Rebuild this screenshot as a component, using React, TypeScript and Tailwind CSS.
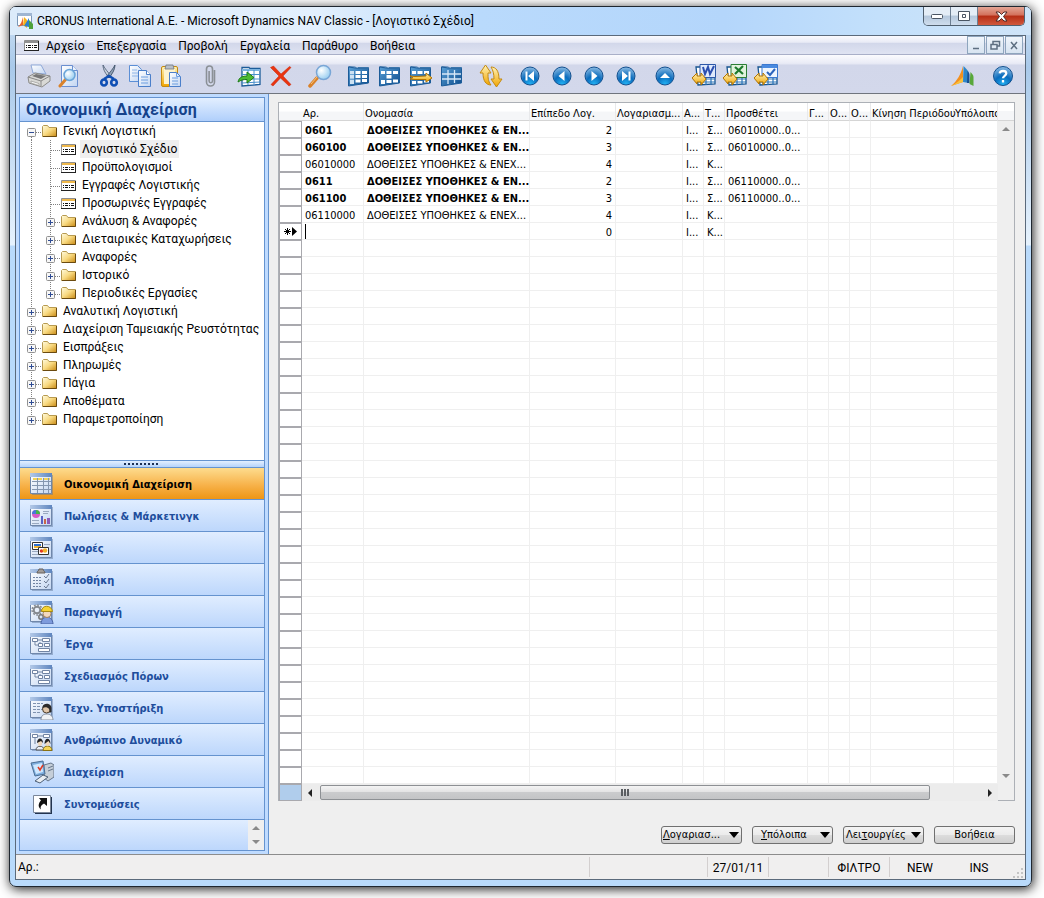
import React, { useState } from "react";

type IconProps = { children: React.ReactNode; size?: number };

const Svg: React.FC<IconProps> = ({ children, size = 24 }) => (
  <svg width={size} height={size} viewBox={`0 0 ${size} ${size}`} fill="none" aria-hidden="true" className="shrink-0">
    {children}
  </svg>
);

/* Gradients shared by all icons */
const Gradients = () => (
  <svg width="0" height="0" className="absolute" aria-hidden="true">
    <defs>
      <linearGradient id="folder" x1="0" y1="0" x2="1" y2="1">
        <stop offset="0" stopColor="#fffbe0" />
        <stop offset="0.5" stopColor="#f8d980" />
        <stop offset="1" stopColor="#c98a14" />
      </linearGradient>
      <linearGradient id="sheet" x1="0" y1="0" x2="1" y2="1">
        <stop offset="0" stopColor="#ffffff" />
        <stop offset="1" stopColor="#c3d6f2" />
      </linearGradient>
      <linearGradient id="bar" x1="0" y1="0" x2="1" y2="0">
        <stop offset="0" stopColor="#b3c9e8" />
        <stop offset="1" stopColor="#5f86bf" />
      </linearGradient>
      <linearGradient id="gold" x1="0" y1="0" x2="0" y2="1">
        <stop offset="0" stopColor="#fff3b8" />
        <stop offset="1" stopColor="#f0a400" />
      </linearGradient>
      <radialGradient id="ball" cx="0.5" cy="0.95" r="0.9">
        <stop offset="0" stopColor="#22b2f4" />
        <stop offset="0.5" stopColor="#0a6cbd" />
        <stop offset="1" stopColor="#7fb3df" />
      </radialGradient>
      <radialGradient id="lens" cx="0.35" cy="0.35" r="0.8">
        <stop offset="0" stopColor="#ffffff" />
        <stop offset="1" stopColor="#86c5ee" />
      </radialGradient>
      <linearGradient id="blue" x1="0" y1="0" x2="1" y2="1">
        <stop offset="0" stopColor="#5aa0d6" />
        <stop offset="1" stopColor="#0b4b8c" />
      </linearGradient>
    </defs>
  </svg>
);

const PrinterIcon = () => (
  <Svg>
    <path d="M6 9 4 1h10l5 9z" fill="url(#sheet)" stroke="#8fa9d8" />
    <path d="M1 13 8 9l15 3v5l-8 6L2 19z" fill="#d9d9d6" stroke="#8b8b88" />
    <path d="m1 13 13 4 9-5M14 17v5" stroke="#888" />
    <path d="m5 12 4-2 10 2-5 3z" fill="#777" />
    <path d="m4 17 8 2.500v2L4 19z" fill="#f6f6f4" stroke="#888" strokeWidth=".6" />
  </Svg>
);

const PreviewIcon = () => (
  <Svg>
    <path d="M3.500 1.500h11l5 5v16h-16z" fill="url(#sheet)" stroke="#6b8fd0" />
    <path d="M14.500 1.500v5h5" fill="#e9f1fc" stroke="#6b8fd0" />
    <path d="m8 15-6 7" stroke="#d9822b" strokeWidth="3" strokeLinecap="round" />
    <circle cx="11.500" cy="11" r="5.500" fill="url(#lens)" stroke="#6aa4d8" strokeWidth="1.500" />
  </Svg>
);

const CutIcon = () => (
  <Svg>
    <path d="M6 1c0 5 3 9 6 13l2-2C11 8 8 5 6 1z" fill="#c9d3de" stroke="#44566e" strokeWidth=".8" />
    <path d="M18 1c0 5-3 9-6 13l-2-2c3-4 6-7 8-11z" fill="#8fa1b5" stroke="#34465e" strokeWidth=".8" />
    <path d="m7 15 5-3 5 3" stroke="#0f4fb4" strokeWidth="2.500" />
    <ellipse cx="7" cy="18.500" rx="2.800" ry="3" stroke="#0f4fb4" strokeWidth="2.600" />
    <ellipse cx="17" cy="18.500" rx="2.800" ry="3" stroke="#0f4fb4" strokeWidth="2.600" />
  </Svg>
);

const CopyIcon = () => (
  <Svg>
    <path d="M1.500 1.500h8l4 4v12h-12z" fill="url(#sheet)" stroke="#5b8fd6" />
    <path d="M4 6h5M4 9h6M4 12h6" stroke="#8fb6e8" />
    <path d="M10.500 6.500h8l4 4v12h-12z" fill="url(#sheet)" stroke="#4b7fca" />
    <path d="M18.500 6.500v4h4" fill="#fff" stroke="#4b7fca" />
    <path d="M13 13h7M13 16h7M13 19h7" stroke="#6d9ee0" />
  </Svg>
);

const PasteIcon = () => (
  <Svg>
    <rect x="2.500" y="2.500" width="16" height="20" rx="1.500" fill="url(#gold)" stroke="#c48a12" />
    <path d="M5 5h11v15H5z" fill="#fdf3cf" />
    <path d="M7 1h7l1 4H6z" fill="#b9bfc8" stroke="#6f7782" strokeWidth=".8" />
    <path d="M10.500 8.500h7l4 4v10h-11z" fill="url(#sheet)" stroke="#4b7fca" />
    <path d="M17.500 8.500v4h4M13 14h6M13 17h6M13 20h6" stroke="#6d9ee0" />
  </Svg>
);

const ClipIcon = () => (
  <Svg>
    <path d="M16.500 6v12a4 4 0 0 1-8 0V5a3 3 0 0 1 6 0v12a1.700 1.700 0 0 1-3.400 0V7" stroke="#8b9096" strokeWidth="1.600" />
  </Svg>
);

const TableSheet = () => (
  <>
    <path d="m1.500 3 7 1h13v15l-20 3z" fill="url(#blue)" stroke="#1c5c99" />
    <path d="m1.500 2.500 7 .5 1 1.500h12V3.500H11" fill="#8fc1e8" stroke="#1c5c99" strokeWidth=".7" />
  </>
);

const InsertIcon = () => (
  <Svg>
    <path d="M5 3.500h7l1 1h10v16L5 22z" fill="#fff" stroke="#1c5c99" strokeWidth="1.300" />
    <path d="M5 6h18" stroke="#7db4e0" strokeWidth="2" />
    <path d="M5 10.500h18M5 15h18M5 19l18-1M11 6v15M17 6v15" stroke="#4a90cc" />
    <path d="M1 18c1-5 5-6 9-6V8l7 5.500-7 5.500v-3.500c-4 0-6 .5-9 2.500z" fill="#4dbb32" stroke="#1b7a17" />
  </Svg>
);

const DeleteIcon = () => (
  <Svg>
    <path d="M1.500 3.500 4.500 2l7.500 8 8.500-7.500 1.500 1-8 8.500 8 8.500-2 1.500-8.500-8L4 22l-2-1.500 8-8.500z" fill="#ea3410" stroke="#c42205" strokeWidth=".5" />
  </Svg>
);

const FindIcon = () => (
  <Svg>
    <path d="m9 14-7 8" stroke="#d9822b" strokeWidth="3.500" strokeLinecap="round" />
    <path d="m9 13-6 7" stroke="#f8c27a" strokeWidth="1" />
    <circle cx="15.500" cy="8.500" r="7" fill="url(#lens)" stroke="#79a6d6" strokeWidth="1.500" />
  </Svg>
);

const CardIcon = () => (
  <Svg>
    <TableSheet />
    <path d="M3 7h4v3H3zM3 11h4v3.500H3zM3 16h4v4H3zM8.500 7h5v3h-5zM8.500 11h5v3h-5zM8.500 15.500h5v3h-5zM15 7h5v3h-5zM15 11h5v3h-5zM15 15h5v3h-5z" fill="#fff" />
    <path d="M3 7h4v13H3z" fill="#9cc6e8" opacity=".5" />
  </Svg>
);

const ListIcon = () => (
  <Svg>
    <TableSheet />
    <path d="M3 7h4v3H3zM8.500 7h5v3h-5zM15 7h5v3h-5zM8.500 11h5v3.500h-5zM3 16h4v4H3zM8.500 16h5v3h-5zM15 15.500h5v3h-5z" fill="#fff" />
  </Svg>
);

const JumpIcon = () => (
  <Svg>
    <TableSheet />
    <path d="M3 7h4v3H3zM8.500 7h5v3h-5zM15 7h5v3h-5zM3 17h4v3H3zM8.500 17h5v2.500h-5zM15 16.500h5v2h-5z" fill="#fff" />
    <path d="m1 12 5 .5 11-.5V9l6 5-6 4v-2.500H6L1 15l3-1.500z" fill="url(#gold)" stroke="#b37400" />
  </Svg>
);

const MatrixIcon = () => (
  <Svg>
    <TableSheet />
    <path d="M2 10h19M2 15h19M8 6v14M14.500 6v13" stroke="#d7e8f7" strokeWidth="1.300" />
  </Svg>
);

const RefreshIcon = () => (
  <Svg>
    <path d="m6.500 1 5.500 8H9c0 5 0 8 3 12-5 0-8-4-8-12H1z" fill="url(#gold)" stroke="#c48a12" />
    <path d="M17.500 23 12 15h3c0-5-1-9-3-12 5 0 8 4 8 12h3z" fill="url(#gold)" stroke="#c48a12" />
  </Svg>
);

const Ball: React.FC<{ d: string }> = ({ d }) => (
  <Svg>
    <circle cx="12" cy="12" r="9" fill="url(#ball)" stroke="#12508f" />
    <path d={d} fill="#fff" />
  </Svg>
);

const ExportIcon: React.FC<{ children: React.ReactNode }> = ({ children }) => (
  <Svg>
    <path d="M4 3h19v17l-17 1z" fill="#fff" stroke="#17548f" strokeWidth="1.300" />
    <path d="M4 15h19M4 18h19M9 14v7M14 14v7M19 14v7" stroke="#2b74b8" strokeWidth="1.200" />
    {children}
    <path d="m0 14 5-5v3h4v-3l5 6-5 6v-3H5v2z" fill="url(#gold)" stroke="#b37400" />
  </Svg>
);

const WordIcon = () => (
  <ExportIcon>
    <path d="M8 .500h15.500v13H8z" fill="#dfe9fb" stroke="#2c57a8" />
    <path d="m11 3 2 7 3-7 2 7 4-8" stroke="#2b4fb0" strokeWidth="2" />
  </ExportIcon>
);

const ExcelIcon = () => (
  <ExportIcon>
    <path d="M8 .500h15.500v13H8z" fill="#e0f2dc" stroke="#2b7d34" />
    <path d="m12 3 8 7M20 2l-8 8" stroke="#1c7a2c" strokeWidth="2.200" />
  </ExportIcon>
);

const TaskIcon = () => (
  <ExportIcon>
    <path d="M8 .500h15.500v13H8z" fill="#eef5fe" stroke="#3b78cf" />
    <path d="M8 1h15v3H8z" fill="#4a8ae0" />
    <path d="m13 8 3 3 5-6" stroke="#2b64bd" strokeWidth="2" />
  </ExportIcon>
);

const DynamicsIcon = () => (
  <Svg>
    <path d="M0 22C6 17 10 10 12 2v16z" fill="#f2901e" />
    <path d="M0 22c6-3 9-6 12-9v5z" fill="#f9c13b" />
    <path d="m12 18 .5-16c2 2 4 4 5 6v11z" fill="#2e86c8" />
    <path d="m16 19 .5-12c1 1 2 2 2 4v8z" fill="#174f93" />
    <path d="m18.500 20 1-12c1 1 3 3 3 5v9z" fill="#58a83a" />
  </Svg>
);

const HelpIcon = () => (
  <Svg>
    <circle cx="12" cy="12" r="9.500" fill="url(#ball)" stroke="#12508f" />
    <path d="M8.700 9.300C9 6.500 15 6 15.300 9.300c0 2.500-3.300 2.500-3.300 5M12 16v2.500" stroke="#fff" strokeWidth="2.300" />
  </Svg>
);

const AppIcon = () => (
  <Svg size={18}>
    <path d="M1.500 1.500h14v12h-14z" fill="#fff" stroke="#7b98b8" />
    <path d="M1 1h15v3H1z" fill="#9fb6d2" />
    <path d="M2 15C5 12 6 9 7 5v8z" fill="#e8632a" />
    <path d="m7 13 1-8 3 3v8z" fill="#f5b21c" />
    <path d="m8 14 5-8v9z" fill="#2d7fca" />
    <path d="m13 8 4 4v5h-4z" fill="#4da23a" />
  </Svg>
);

const FormIcon: React.FC<{ bar: string }> = ({ bar }) => (
  <svg width="15" height="11" viewBox="0 0 15 11" aria-hidden="true" className="shrink-0">
    <path d="M.5.5h14v10H.5z" fill="#fff" stroke="#8f8f8f" />
    <path d="M1 1h13v2H1z" fill={bar} />
    <path d="M14.500 1v10M0 10.500h15" stroke="#222" />
    <path d="M2 5h1v1H2zM4 5h3v1H4zM8 5h1v1H8zM10 5h3v1h-3zM2 7h1v1H2zM4 7h3v1H4zM8 7h1v1H8zM10 7h3v1h-3z" fill="#111" />
  </svg>
);

const FolderIcon = () => (
  <svg width="15" height="12" viewBox="0 0 15 12" aria-hidden="true" className="shrink-0">
    <path d="M.5 11.500v-10l1-1h4l1.500 2h7.500v9z" fill="url(#folder)" stroke="#b79a50" />
    <path d="M14.500 3v8.500H1" stroke="#6a4a10" fill="none" />
  </svg>
);

/* Sidebar icons share a small window frame */
const Frame: React.FC<{ children: React.ReactNode }> = ({ children }) => (
  <Svg>
    <path d="M2 3h21v20H2z" fill="#5d7396" opacity=".45" />
    <path d="M.5 1.500h21v20H.5z" fill="url(#sheet)" stroke="#6f87ab" />
    <path d="M0 1h22v4H0z" fill="url(#bar)" />
    {children}
  </Svg>
);

const FlowChart = () => (
  <path d="M2.500 6.500h5v3h-5zM12.500 6.500h7v3h-7zM8.500 11.500h4v3h-4zM14.500 11.500h5v3h-5zM8.500 16.500h11v3h-11zM7 8h5M5 10v3h3M10 10v1" fill="#fff" stroke="#7184a3" />
);

const FinanceIcon = () => (
  <Frame>
    <path d="M3 6h4v2H3zM8 6h4v2H8zM14 6h6v2h-6z" fill="#f1d35a" />
    <path d="M2 9.500h19M2 13.500h19M2 17.500h19M7.500 6v15M13.500 6v15M18.500 6v15" stroke="#8496b0" />
  </Frame>
);

const SalesIcon = () => (
  <Frame>
    <circle cx="6" cy="10" r="4" fill="#d65bc5" />
    <path d="M6 10V6a4 4 0 0 1 4 4z" fill="#46b44a" />
    <path d="M6 10H2a4 4 0 0 1 4-4z" fill="#4a76d8" />
    <path d="M2 16.500h7M2 19.500h7M13 7.500h6M13 9.500h5" stroke="#9aa9c0" />
    <path d="M11 12h2v8h-2z" fill="#5a63c4" />
    <path d="M14 15h2v5h-2z" fill="#c9664a" />
    <path d="M17 14h3v6h-3z" fill="#8c5ab8" />
  </Frame>
);

const PurchaseIcon = () => (
  <Frame>
    <path d="M2 12.500h5M2 15.500h7M2 18.500h6M14 8.500h6" stroke="#9aa9c0" />
    <path d="M2.500 6.500h10v7h-10z" fill="#fff" stroke="#333" />
    <path d="M4 8h7v2H4z" fill="#2d6fd0" />
    <path d="M4 10h7v2H4z" fill="#f3b32d" />
    <path d="M8.500 11.500h10v7h-10z" fill="#fff" stroke="#333" />
    <circle cx="11.500" cy="15" r="1.800" fill="#e23b22" />
    <circle cx="15" cy="14.500" r="2.300" fill="#f3b32d" />
  </Frame>
);

const WarehouseIcon = () => (
  <Frame>
    <path d="M7 5c0-2 2-2 2-4h4c0 2 2 2 2 4z" fill="#a19c98" stroke="#66605c" />
    <path d="M3 9.500h9M3 12.500h8M3 15.500h9M3 18.500h8" stroke="#7184a3" strokeDasharray="2 1" />
    <path d="m14 8 2 2 3-4M14 13l2 2 3-4M14 18l2 2 3-4" stroke="#6c7a92" />
  </Frame>
);

const ProductionIcon = () => (
  <Frame>
    <circle cx="7" cy="10" r="3.300" stroke="#85898f" strokeWidth="2" />
    <circle cx="7" cy="10" r="5" stroke="#85898f" strokeWidth="1.500" strokeDasharray="1.800 1.500" />
    <circle cx="11" cy="17" r="2.200" stroke="#777" strokeWidth="1.500" />
    <path d="M11 24c0-5 4-7 6-7s6 2 6 7z" fill="#7e9bdc" stroke="#4a64a5" />
    <circle cx="17" cy="13.500" r="4" fill="#f3d9bf" stroke="#a5835f" />
    <path d="M11.500 11.500c0-7 10-7 11 0z" fill="#f6d332" stroke="#a98a12" />
  </Frame>
);

const ServiceIcon = () => (
  <Frame>
    <path d="M3 7.500h10M3 10.500h7M3 13.500h9M3 16.500h7" stroke="#8093b0" strokeDasharray="3 1" />
    <path d="M11 24c0-5 3-6 6-6s6 2 6 6z" fill="#f0f2f5" stroke="#8a93a3" />
    <circle cx="16.500" cy="13" r="4" fill="#e2c6a8" stroke="#4b3c2c" />
    <path d="M12.500 11c1-5 9-4 9 1v4l-2 1c1-5-3-7-7-5z" fill="#2d2b2a" />
  </Frame>
);

const PeopleIcon = () => (
  <Frame>
    <path d="M2.500 6.500h5v3h-5zM13.500 6.500h6v3h-6zM7 8h6M5 10v6" fill="#fff" stroke="#7184a3" />
    <path d="M6 22c0-5 8-5 8 0z" fill="#e8eef7" stroke="#555" />
    <path d="M13 22.500c0-6 9-6 9 0z" fill="#f3d457" stroke="#8a7212" />
    <ellipse cx="10" cy="15" rx="2.200" ry="3" fill="#eed8bd" />
    <path d="M7 15c0-6 6-6 6 0l-2-2z" fill="#222" />
    <ellipse cx="17.500" cy="15" rx="2.200" ry="3" fill="#eed8bd" />
    <path d="M14.500 16c0-7 6-7 6 0l-2-3z" fill="#222" />
  </Frame>
);

const AdminIcon = () => (
  <Svg>
    <path d="m14 5 7-2 3 2v12l-6 4-4-3z" fill="#c5ced8" stroke="#66778c" />
    <path d="m18 8 5-2M18 11l5-2" stroke="#66778c" />
    <path d="m1 3 12-2 2 13-10 2z" fill="#7eaede" stroke="#4b6e94" />
    <path d="m3 5 9-2 1 9-7 2z" fill="#cfe8ff" />
    <path d="m8 7 2 3 3-5" stroke="#e23b22" strokeWidth="1.500" />
    <path d="m5 21 8-6 5 2-8 6z" fill="#e8edf2" stroke="#4e6077" />
  </Svg>
);

const ShortcutIcon = () => (
  <Svg>
    <path d="M5 5h17v17H5z" fill="#23344f" />
    <path d="M3.500 3.500h17v17h-17z" fill="#fff" stroke="#7a8699" />
    <path d="M9 6h8v8l-3-2.500c-3 2-4 3-3 6-4-3-2-7 0-9z" fill="#111" />
  </Svg>
);

const toolbarGroups: { gap: string; items: { label: string; icon: React.ReactNode }[] }[] = [
  {
    gap: "gap-[7px]",
    items: [
      { label: "Εκτύπωση", icon: <PrinterIcon /> },
      { label: "Προεπισκόπηση", icon: <PreviewIcon /> },
    ],
  },
  {
    gap: "gap-[7px]",
    items: [
      { label: "Αποκοπή", icon: <CutIcon /> },
      { label: "Αντιγραφή", icon: <CopyIcon /> },
      { label: "Επικόλληση", icon: <PasteIcon /> },
    ],
  },
  { gap: "gap-2", items: [{ label: "Συνδέσεις", icon: <ClipIcon /> }] },
  {
    gap: "gap-2",
    items: [
      { label: "Εισαγωγή", icon: <InsertIcon /> },
      { label: "Διαγραφή", icon: <DeleteIcon /> },
    ],
  },
  { gap: "gap-2", items: [{ label: "Εύρεση", icon: <FindIcon /> }] },
  {
    gap: "gap-[7px]",
    items: [
      { label: "Φίλτρο πεδίου", icon: <CardIcon /> },
      { label: "Φίλτρο πίνακα", icon: <ListIcon /> },
      { label: "Φίλτρο ροής", icon: <JumpIcon /> },
      { label: "Εμφάνιση όλων", icon: <MatrixIcon /> },
    ],
  },
  { gap: "gap-2", items: [{ label: "Ταξινόμηση", icon: <RefreshIcon /> }] },
  {
    gap: "gap-2",
    items: [
      { label: "Πρώτο", icon: <Ball d="M7.500 7.500h2v9h-2zM16 7v10l-6-5z" /> },
      { label: "Προηγούμενο", icon: <Ball d="M14.500 7v10l-6-5z" /> },
      { label: "Επόμενο", icon: <Ball d="M9.500 7v10l6-5z" /> },
      { label: "Τελευταίο", icon: <Ball d="M14.500 7.500h2v9h-2zM8 7v10l6-5z" /> },
    ],
  },
  { gap: "gap-2", items: [{ label: "Επάνω", icon: <Ball d="M7 14h10l-5-5z" /> }] },
  {
    gap: "gap-[7px]",
    items: [
      { label: "Word", icon: <WordIcon /> },
      { label: "Excel", icon: <ExcelIcon /> },
      { label: "Εργασίες", icon: <TaskIcon /> },
    ],
  },
];

interface TreeRow {
  label: string;
  level: number;
  kind: "plus" | "minus" | "leaf";
  last?: boolean;
}

const treeRows: TreeRow[] = [
  { label: "Γενική Λογιστική", level: 0, kind: "minus" },
  { label: "Λογιστικό Σχέδιο", level: 1, kind: "leaf" },
  { label: "Προϋπολογισμοί", level: 1, kind: "leaf" },
  { label: "Εγγραφές Λογιστικής", level: 1, kind: "leaf" },
  { label: "Προσωρινές Εγγραφές", level: 1, kind: "leaf" },
  { label: "Ανάλυση & Αναφορές", level: 1, kind: "plus" },
  { label: "Διεταιρικές Καταχωρήσεις", level: 1, kind: "plus" },
  { label: "Αναφορές", level: 1, kind: "plus" },
  { label: "Ιστορικό", level: 1, kind: "plus" },
  { label: "Περιοδικές Εργασίες", level: 1, kind: "plus", last: true },
  { label: "Αναλυτική Λογιστική", level: 0, kind: "plus" },
  { label: "Διαχείριση Ταμειακής Ρευστότητας", level: 0, kind: "plus" },
  { label: "Εισπράξεις", level: 0, kind: "plus" },
  { label: "Πληρωμές", level: 0, kind: "plus" },
  { label: "Πάγια", level: 0, kind: "plus" },
  { label: "Αποθέματα", level: 0, kind: "plus" },
  { label: "Παραμετροποίηση", level: 0, kind: "plus", last: true },
];

const navItems = [
  { label: "Οικονομική Διαχείριση", icon: <FinanceIcon /> },
  { label: "Πωλήσεις & Μάρκετινγκ", icon: <SalesIcon /> },
  { label: "Αγορές", icon: <PurchaseIcon /> },
  { label: "Αποθήκη", icon: <WarehouseIcon /> },
  { label: "Παραγωγή", icon: <ProductionIcon /> },
  { label: "Έργα", icon: <Frame><FlowChart /></Frame> },
  { label: "Σχεδιασμός Πόρων", icon: <Frame><FlowChart /></Frame> },
  { label: "Τεχν. Υποστήριξη", icon: <ServiceIcon /> },
  { label: "Ανθρώπινο Δυναμικό", icon: <PeopleIcon /> },
  { label: "Διαχείριση", icon: <AdminIcon /> },
  { label: "Συντομεύσεις", icon: <ShortcutIcon /> },
];

const columns = [
  { label: "Αρ.", width: "w-[62px]" },
  { label: "Ονομασία", width: "w-[166px]" },
  { label: "Επίπεδο Λογ.", width: "w-[86px]" },
  { label: "Λογαριασμ...", width: "w-[67px]" },
  { label: "Α...", width: "w-[21px]" },
  { label: "Τ...", width: "w-[21px]" },
  { label: "Προσθέτει", width: "w-[83px]" },
  { label: "Γ...", width: "w-[21px]" },
  { label: "Ο...", width: "w-[21px]" },
  { label: "Ο...", width: "w-[21px]" },
  { label: "Κίνηση Περιόδου", width: "w-[83px]" },
  { label: "Υπόλοιπο", width: "" },
];

const accounts = [
  { no: "0601", name: "ΔΟΘΕΙΣΕΣ ΥΠΟΘΗΚΕΣ & ΕΝ...", level: 2, type: "Σ...", totals: "06010000..0...", bold: true },
  { no: "060100", name: "ΔΟΘΕΙΣΕΣ ΥΠΟΘΗΚΕΣ & ΕΝ...", level: 3, type: "Σ...", totals: "06010000..0...", bold: true },
  { no: "06010000", name: "ΔΟΘΕΙΣΕΣ ΥΠΟΘΗΚΕΣ & ΕΝΕΧ...", level: 4, type: "Κ...", totals: "", bold: false },
  { no: "0611", name: "ΔΟΘΕΙΣΕΣ ΥΠΟΘΗΚΕΣ & ΕΝ...", level: 2, type: "Σ...", totals: "06110000..0...", bold: true },
  { no: "061100", name: "ΔΟΘΕΙΣΕΣ ΥΠΟΘΗΚΕΣ & ΕΝ...", level: 3, type: "Σ...", totals: "06110000..0...", bold: true },
  { no: "06110000", name: "ΔΟΘΕΙΣΕΣ ΥΠΟΘΗΚΕΣ & ΕΝΕΧ...", level: 4, type: "Κ...", totals: "", bold: false },
];

const EMPTY_ROWS = 32;

const TitleBar = () => (
  <header className="flex h-[28px] items-start rounded-t-[5px] bg-[linear-gradient(90deg,#dcebfa_0%,#e3f0fd_30%,#b9dafc_46%,#b4d6fb_70%,#c3e0fb_85%,#cfe4f8_100%)]">
    <h1 className="flex flex-1 items-center gap-[3px] pt-[5px] pl-[6px] text-[12px] leading-[18px] font-normal text-black">
      <AppIcon />
      CRONUS International A.E. - Microsoft Dynamics NAV Classic - [Λογιστικό Σχέδιο]
    </h1>
    <div className="mr-[6px] flex h-[19px] overflow-hidden rounded-b-[5px] border border-t-0 border-[#51606f]">
      <button aria-label="Ελαχιστοποίηση" className="flex w-[27px] items-center justify-center border-r border-[#6d7f92] bg-[linear-gradient(#e4edf6_45%,#b5c8dc_50%,#cfdded)]">
        <svg width="12" height="5" viewBox="0 0 12 5"><rect x=".5" y=".5" width="11" height="4" rx="1" fill="#fff" stroke="#4a5563" /></svg>
      </button>
      <button aria-label="Μεγιστοποίηση" className="flex w-[27px] items-center justify-center border-r border-[#6d7f92] bg-[linear-gradient(#e4edf6_45%,#b5c8dc_50%,#cfdded)]">
        <svg width="12" height="10" viewBox="0 0 12 10"><path d="M.5.5h11v9H.5zM4.500 3.500h3v3h-3z" fill="#fff" stroke="#4a5563" /></svg>
      </button>
      <button aria-label="Κλείσιμο" className="flex w-[46px] items-center justify-center bg-[linear-gradient(#e3a595_0%,#d3705b_45%,#b52d15_50%,#d1583c)]">
        <svg width="13" height="11" viewBox="0 0 13 11"><path d="M1 1h3l2.500 2.500L9 1h3L8.500 5.500 12 10H9L6.500 7.500 4 10H1l3.500-4.500z" fill="#fff" stroke="#4d2a28" /></svg>
      </button>
    </div>
  </header>
);

const MenuBar = () => (
  <nav className="flex h-[19px] items-center border-b border-[#a9afc8] bg-[linear-gradient(#fbfbfe_0%,#e9ebf6_35%,#d2d7ea_40%,#dfe3f2_100%)] pr-[2px] pl-2">
    <FormIcon bar="#8f8f8f" />
    <ul className="ml-[7px] flex flex-1 gap-3 pt-px text-[12px] leading-[18px]">
      {["Αρχείο", "Επεξεργασία", "Προβολή", "Εργαλεία", "Παράθυρο", "Βοήθεια"].map((item) => (
        <li key={item}>
          <button className="block">{item}</button>
        </li>
      ))}
    </ul>
    <div className="flex h-[18px] gap-px">
      {[
        { label: "Ελαχιστοποίηση φόρμας", d: "M5 11.500h6" },
        { label: "Επαναφορά φόρμας", d: "M6 7V4.500h6.500V9H10M4 7.500h6V12H4z" },
        { label: "Κλείσιμο φόρμας", d: "m5 5 6 7M11 5l-6 7" },
      ].map((b) => (
        <button key={b.label} aria-label={b.label} className="flex w-[18px] items-center justify-center border border-[#8ea5bd] bg-[linear-gradient(#f0f5fb,#d8e4f1)]">
          <svg width="16" height="16" viewBox="0 0 16 16" fill="none" className="shrink-0"><path d={b.d} stroke="#5e6f81" strokeWidth="1.500" /></svg>
        </button>
      ))}
    </div>
  </nav>
);

const Toolbar = () => (
  <div role="toolbar" aria-label="Εργαλεία" className="flex h-[39px] items-center gap-[15px] border-b border-[#70757e] bg-[linear-gradient(#fbfbfe_0%,#e9ebf6_22%,#d2d7ea_27%,#d3d8eb_100%)] pt-[3px] pr-[10px] pl-[11px]">
    {toolbarGroups.map((group) => (
      <div key={group.items[0].label} className={`flex ${group.gap}`}>
        {group.items.map((item) => (
          <button key={item.label} aria-label={item.label} title={item.label}>
            {item.icon}
          </button>
        ))}
      </div>
    ))}
    <div className="ml-auto flex gap-4">
      <button aria-label="Microsoft Dynamics"><DynamicsIcon /></button>
      <button aria-label="Βοήθεια"><HelpIcon /></button>
    </div>
  </div>
);

/* Dotted connector with the optional +/- box of a tree row */
const Connector: React.FC<{ row: TreeRow; first: boolean }> = ({ row, first }) => (
  <svg width="15" height="18" viewBox="0 0 15 18" fill="none" aria-hidden="true" className="shrink-0">
    <path d={`M4.500 ${first ? 9 : 0}V${row.last ? 10 : 18}M5 10.500h10`} stroke="#808080" strokeDasharray="1 1" />
    {row.kind !== "leaf" && (
      <>
        <rect x=".5" y="6.500" width="8" height="8" rx="1" fill="#f7f7f7" stroke="#919191" />
        <path d={row.kind === "plus" ? "M2 10.500h5M4.500 8v5" : "M2 10.500h5"} stroke="#2f4c94" />
      </>
    )}
  </svg>
);

const Tree = () => {
  const [selected, setSelected] = useState(1);

  return (
    <ul className="flex-1 bg-white pl-[7px] text-[12px] leading-[18px]">
      {treeRows.map((row, i) => (
        <li key={row.label} className="flex h-[18px] items-center">
          {row.level === 1 && (
            <svg width="19" height="18" viewBox="0 0 19 18" aria-hidden="true" className="shrink-0">
              <path d="M4.500 0v18" stroke="#808080" strokeDasharray="1 1" />
            </svg>
          )}
          <Connector row={row} first={i === 0} />
          {row.kind === "leaf" ? <FormIcon bar="#efb84a" /> : <FolderIcon />}
          <button
            className={`ml-1 px-[2px] whitespace-nowrap ${selected === i ? "bg-[#efefef]" : ""}`}
            onClick={() => setSelected(i)}
          >
            {row.label}
          </button>
        </li>
      ))}
    </ul>
  );
};

const Sidebar = () => {
  const [active, setActive] = useState(0);

  return (
    <aside className="flex w-[253px] shrink-0 flex-col border-r border-[#6593cf] bg-[#bfdbff] py-[3px] pr-[3px] pl-[3px]">
      <div className="flex flex-1 flex-col border border-[#6593cf]">
        <h2 className="h-[24px] border-b border-[#6593cf] bg-[linear-gradient(#e3efff,#b0cffb)] pl-[6px] text-[16px] leading-[24px] font-bold whitespace-nowrap text-[#15428b]">
          Οικονομική Διαχείριση
        </h2>
        <Tree />
        <div className="flex h-[8px] items-center justify-center border-y border-[#6593cf] bg-[linear-gradient(#e3efff,#b5d3fb)]">
          <svg width="36" height="3" viewBox="0 0 36 3"><path d="M0 1h36" stroke="#1b2f55" strokeWidth="2" strokeDasharray="2 2" /></svg>
        </div>
        {navItems.map((item, i) => (
          <button
            key={item.label}
            onClick={() => setActive(i)}
            className={`flex h-8 items-center gap-[10px] border-b border-[#6593cf] pl-[10px] font-['DejaVu_Sans_Condensed','DejaVu_Sans'] text-[11px] font-bold ${
              active === i
                ? "bg-[linear-gradient(#fddc8e,#f7b24a_55%,#ee9515)] text-black"
                : "bg-[linear-gradient(#e0edff,#bdd7fc)] text-[#204d9c]"
            }`}
          >
            {item.icon}
            <span className="pt-[3px]">{item.label}</span>
          </button>
        ))}
        <div className="flex h-[30px] justify-end bg-[linear-gradient(#e0edff,#bdd7fc)]">
          <div className="flex w-4 flex-col items-center justify-between bg-[#efefef] py-[6px]">
            <button aria-label="Πάνω" className="border-x-4 border-b-4 border-x-transparent border-b-[#8a8a8a]" />
            <button aria-label="Κάτω" className="border-x-4 border-t-4 border-x-transparent border-t-[#8a8a8a]" />
          </div>
        </div>
      </div>
    </aside>
  );
};

const selector = "border border-[#a9a9ae] bg-white p-0";
const cell = "overflow-hidden border-r border-b border-[#efefef] px-[3px] pt-[3px] pb-0 whitespace-nowrap";

const AccountGrid = () => (
  <div className="border border-b-0 border-[#acb0b6] bg-white font-['DejaVu_Sans_Condensed','DejaVu_Sans'] text-[11px] leading-[13px]">
    <div className="flex">
      <div className="min-w-0 flex-1">
        <table className="w-full table-fixed border-separate border-spacing-0">
          <thead>
            <tr className="h-[18px] bg-[linear-gradient(#ffffff_45%,#f5f6f8_50%)] text-left">
              <th aria-label="Επιλογή" className="w-[23px] border-b border-[#d5d5d5] p-0" />
              {columns.map((col, i) => (
                <th key={i} className={`border-r border-b border-r-[#e8e9eb] border-b-[#d5d5d5] pt-1 pr-0 pb-0 pl-px font-normal whitespace-nowrap last:overflow-hidden ${col.width}`}>
                  {col.label}
                </th>
              ))}
            </tr>
          </thead>
          <tbody>
            {accounts.map((a) => (
              <tr key={a.no} className="h-[17px]">
                <td className={selector} />
                <td className={`${cell} ${a.bold ? "font-bold" : ""}`}>{a.no}</td>
                <td className={`${cell} ${a.bold ? "font-bold" : ""}`}>{a.name}</td>
                <td className={`${cell} text-right`}>{a.level}</td>
                <td className={cell} />
                <td className={cell}>Ι...</td>
                <td className={cell}>{a.type}</td>
                <td className={cell}>{a.totals}</td>
                <td className={cell} />
                <td className={cell} />
                <td className={cell} />
                <td className={cell} />
                <td className={cell} />
              </tr>
            ))}
            <tr className="h-[17px]">
              <td className={selector}>
                <svg width="20" height="15" viewBox="0 0 20 15" className="block" aria-hidden="true">
                  <path d="M4 7.500h7M7.500 4v7M5 5l5 5M10 5l-5 5" stroke="#000" />
                  <path d="M12 3v9l5-4.500z" fill="#000" />
                </svg>
              </td>
              <td className="border-r border-b border-[#efefef] px-[3px] py-0">
                <input aria-label="Αρ." className="block h-[15px] w-full border-l border-black outline-none" />
              </td>
              <td className={cell} />
              <td className={`${cell} text-right`}>0</td>
              <td className={cell} />
              <td className={cell}>Ι...</td>
              <td className={cell}>Κ...</td>
              <td className={cell} />
              <td className={cell} />
              <td className={cell} />
              <td className={cell} />
              <td className={cell} />
              <td className={cell} />
            </tr>
            {Array.from({ length: EMPTY_ROWS }, (_, r) => (
              <tr key={r} className="h-[17px]">
                <td className={selector} />
                {columns.map((_, c) => (
                  <td key={c} className={cell} />
                ))}
              </tr>
            ))}
          </tbody>
        </table>
      </div>
      <div className="flex w-4 flex-col">
        <div className="h-[18px] border-b border-[#d5d5d5] bg-[linear-gradient(#ffffff_45%,#f5f6f8_50%)]" />
        <div className="flex flex-1 flex-col items-center justify-between bg-[#efefef] py-[6px]">
          <button aria-label="Κύλιση πάνω" className="border-x-4 border-b-4 border-x-transparent border-b-[#8a8a8a]" />
          <button aria-label="Κύλιση κάτω" className="border-x-4 border-t-4 border-x-transparent border-t-[#8a8a8a]" />
        </div>
      </div>
    </div>
    <div className="flex h-[17px] bg-[#efefef]">
      <div className="w-[23px] border border-[#a9a9ae] bg-[#b0cdec]" />
      <div className="flex flex-1 items-center bg-[#ececec]">
        <button aria-label="Κύλιση αριστερά" className="mr-2 ml-[6px] h-0 w-0 border-y-4 border-r-4 border-y-transparent border-r-[#222]" />
        <div className="flex h-[15px] flex-1 items-center justify-center gap-px rounded-[2px] border border-[#8d9094] bg-[linear-gradient(#f4f4f4_0%,#e3e3e4_45%,#cacbcd_50%,#c3c4c6_100%)]">
          <span className="h-[7px] w-[2px] bg-[#5b5e62]" />
          <span className="h-[7px] w-[2px] bg-[#5b5e62]" />
          <span className="h-[7px] w-[2px] bg-[#5b5e62]" />
        </div>
        <button aria-label="Κύλιση δεξιά" className="mr-[6px] ml-[58px] h-0 w-0 border-y-4 border-l-4 border-y-transparent border-l-[#222]" />
      </div>
      <div className="w-4 border-b border-[#acb0b6]" />
    </div>
  </div>
);

const formButton =
  "flex h-[18px] w-[81px] items-center rounded-[3px] border border-[#707070] bg-[linear-gradient(#f4f4f4_0%,#ebebeb_48%,#dcdcdc_52%,#cfcfcf_100%)] whitespace-nowrap";

const Chevron = () => (
  <span className="mr-[2px] h-0 w-0 shrink-0 border-x-[5px] border-t-[6px] border-x-transparent border-t-black" />
);

const FormButtons = () => (
  <div className="mt-auto flex justify-end gap-[10px] font-['DejaVu_Sans_Condensed','DejaVu_Sans'] text-[11px] leading-[16px]">
    <button className={`${formButton} justify-between pl-px`}>
      <span><u>Λ</u>ογαριασ...</span>
      <Chevron />
    </button>
    <button className={`${formButton} justify-between pl-2`}>
      <span><u>Υ</u>πόλοιπα</span>
      <Chevron />
    </button>
    <button className={`${formButton} justify-between pl-[2px]`}>
      <span>Λει<u>τ</u>ουργίες</span>
      <Chevron />
    </button>
    <button className={`${formButton} justify-center`}>Βοήθεια</button>
  </div>
);

const StatusBar = () => (
  <footer className="flex h-[25px] items-center border-t border-[#8c8c8c] bg-[#f0efef] text-center text-[12px] leading-[24px]">
    <span className="flex-1 pl-[2px] text-left">Αρ.:</span>
    <span className="h-[20px] w-[118px] border-l border-[#d3cfcf]" />
    <span className="h-[20px] w-[61px] border-l border-[#d3cfcf] leading-[22px]">27/01/11</span>
    <span className="h-[20px] w-[60px] border-l border-[#d3cfcf]" />
    <span className="h-[20px] w-[61px] border-l border-[#d3cfcf] leading-[22px]">ΦΙΛΤΡΟ</span>
    <span className="h-[20px] w-[61px] border-l border-[#d3cfcf] leading-[22px]">NEW</span>
    <span className="h-[20px] w-[58px] leading-[22px]">INS</span>
    <svg width="17" height="24" viewBox="0 0 17 24" fill="#c4c4c4" aria-hidden="true">
      <path d="M13 13h2v2h-2zM13 17h2v2h-2zM13 21h2v2h-2zM9 17h2v2H9zM9 21h2v2H9zM5 21h2v2H5z" />
    </svg>
  </footer>
);

const App = () => (
  <div className="flex min-h-screen flex-col bg-white pt-[6px] pr-[12px] pb-[11px] pl-[9px] font-['Roboto','Noto_Sans',sans-serif] text-black">
    <Gradients />
    <div className="flex flex-1 flex-col rounded-[7px] border border-[#1f2730] bg-[linear-gradient(#cfe2f5_0px,#a9c9ea_60px,#e6f2fd_238px,#b9dafb_239px,#b9dafb_100%)] shadow-[1px_2px_12px_rgba(0,0,0,0.9)]">
      <TitleBar />
      <div className="mx-[5px] mb-[6px] flex flex-1 flex-col border border-[#5b6a7b] bg-[#efefef]">
        <MenuBar />
        <Toolbar />
        <div className="flex flex-1">
          <Sidebar />
          <main className="flex min-w-0 flex-1 flex-col pt-2 pr-[10px] pb-[10px] pl-[9px]">
            <AccountGrid />
            <FormButtons />
          </main>
        </div>
        <StatusBar />
      </div>
    </div>
  </div>
);

export default App;
